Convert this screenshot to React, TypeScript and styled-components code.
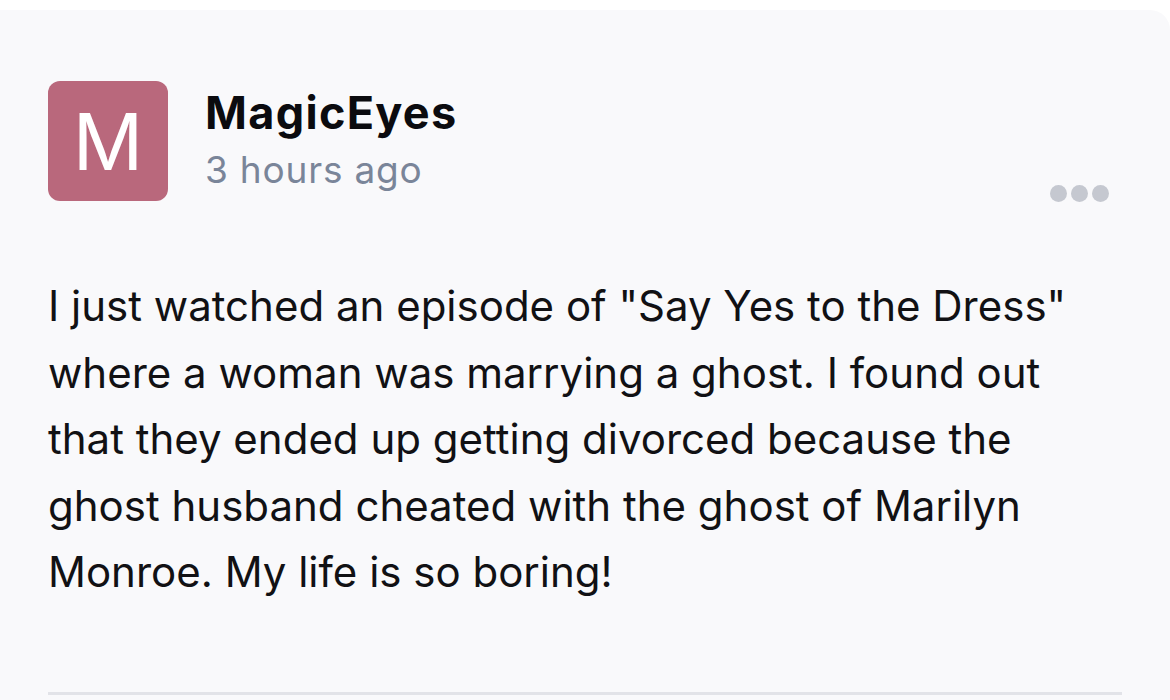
import React from 'react';
import styled, { createGlobalStyle } from 'styled-components';

const GlobalStyle = createGlobalStyle`
  html, body {
    margin: 0;
    padding: 0;
    background: #ffffff;
    font-family: Inter, "Noto Sans", sans-serif;
  }
`;

const Card = styled.article`
  margin-top: 10px;
  min-height: 690px;
  background-color: #f9f9fb;
  border-top-right-radius: 20px;
  padding: 71px 48px 0 48px;
  box-sizing: border-box;
  display: flex;
  flex-direction: column;
`;

const Header = styled.header`
  display: flex;
  align-items: flex-start;
`;

const Avatar = styled.div<{ $bg: string }>`
  width: 120px;
  height: 120px;
  border-radius: 12px;
  background-color: ${(p) => p.$bg};
  color: #ffffff;
  font-size: 78px;
  font-weight: 400;
  display: flex;
  align-items: center;
  justify-content: center;
  flex-shrink: 0;
`;

const Meta = styled.div`
  display: flex;
  flex-direction: column;
  margin-left: 37px;
  margin-top: 4px;
  flex: 1;
`;

const Name = styled.div`
  font-size: 45px;
  font-weight: 700;
  letter-spacing: 1.3px;
  color: #0b0b0f;
  line-height: 56px;
`;

const Time = styled.div`
  font-size: 37px;
  letter-spacing: 0.8px;
  color: #7a8599;
  line-height: 58px;
`;

const MoreButton = styled.button`
  display: flex;
  gap: 4px;
  background: none;
  border: none;
  padding: 0;
  margin-top: 104px;
  margin-right: 13px;
  cursor: pointer;
`;

const Dot = styled.span`
  width: 17px;
  height: 17px;
  border-radius: 50%;
  background-color: #c5c8d0;
`;

const Body = styled.p`
  margin: 71px 0 0 0;
  font-size: 42px;
  line-height: 66.5px;
  color: #111114;
  max-width: 1074px;
`;

const Divider = styled.hr`
  margin: auto 0 5px 0;
  border: none;
  height: 3px;
  background-color: #e2e3e8;
`;

const App: React.FC = () => {
  return (
    <>
      <GlobalStyle />
      <Card>
        <Header>
          <Avatar $bg="#b9687c">M</Avatar>
          <Meta>
            <Name>MagicEyes</Name>
            <Time>3 hours ago</Time>
          </Meta>
          <MoreButton aria-label="More">
            <Dot />
            <Dot />
            <Dot />
          </MoreButton>
        </Header>
        <Body>
          I just watched an episode of "Say Yes to the Dress" where a woman was marrying a ghost. I found
          out that they ended up getting divorced because the ghost husband cheated with the ghost of
          Marilyn Monroe. My life is so boring!
        </Body>
        <Divider />
      </Card>
    </>
  );
};

export default App;
